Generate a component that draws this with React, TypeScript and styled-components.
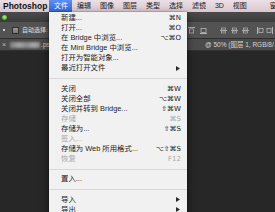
import React from "react";
import styled, { createGlobalStyle } from "styled-components";

const GlobalStyle = createGlobalStyle`
  html, body { margin: 0; padding: 0; background: #262626; }
  body {
    width: 275px; height: 212px; overflow: hidden;
    font-family: "Liberation Sans", "Noto Sans CJK SC", sans-serif;
  }
  #root { width: 275px; height: 212px; }
`;

const Screen = styled.div`
  position: relative;
  width: 275px;
  height: 212px;
  overflow: hidden;
  display: flex;
  flex-direction: column;
  background: #262626;
`;

const MenuBar = styled.div`
  flex: none;
  height: 12px;
  display: flex;
  align-items: stretch;
  overflow: hidden;
  background: linear-gradient(#eddfe6, #d9c7d0);
`;

const AppName = styled.div`
  font-weight: 700;
  font-size: 8.5px;
  line-height: 12px;
  color: #141414;
  padding: 0 2px 0 3px;
`;

const MenuTitle = styled.div<{ $active?: boolean; $lead?: number }>`
  font-size: 7px;
  line-height: 12px;
  padding: 0 4.5px;
  margin-left: ${(p) => p.$lead ?? 0}px;
  white-space: nowrap;
  flex: none;
  color: ${(p) => (p.$active ? "#ffffff" : "#1a1a1a")};
  background: ${(p) =>
    p.$active ? "linear-gradient(#5b8ff0, #3467d8)" : "transparent"};
`;

const TitleStrip = styled.div`
  flex: none;
  height: 10px;
  display: flex;
  align-items: center;
  padding-left: 2px;
  background: linear-gradient(#4a4a4a, #3b3b3b);
`;

const TrafficDot = styled.div`
  width: 5px;
  height: 5px;
  border-radius: 50%;
  background: radial-gradient(circle at 50% 40%, #b9f08a, #4fb22a 70%, #2f7a18);
`;

const OptionsBar = styled.div`
  flex: none;
  height: 16px;
  display: grid;
  grid-template-columns: 1fr 87px;
  align-items: center;
  background: #535353;
  border-bottom: 1px solid #2f2f2f;
`;

const OptionsLeft = styled.div`
  display: flex;
  align-items: center;
  padding-left: 3px;
`;

const ToolDot = styled.div`
  width: 2px;
  height: 2px;
  background: #d0d0d0;
  margin-right: 7px;
`;

const CheckBox = styled.div`
  width: 5px;
  height: 5px;
  border: 0.5px solid #2e2e2e;
  background: linear-gradient(#9a9a9a, #767676);
  margin-right: 3px;
`;

const OptLabel = styled.span`
  font-size: 6px;
  line-height: 8px;
  color: #e2e2e2;
  white-space: nowrap;
`;

const OptionsRight = styled.div`
  display: flex;
  align-items: center;
`;

const IconGroup = styled.div<{ $gap: number; $after: number }>`
  display: flex;
  align-items: center;
  gap: ${(p) => p.$gap}px;
  margin-right: ${(p) => p.$after}px;
`;

const IconBox = styled.svg`
  width: 7px;
  height: 7px;
  flex: none;
  display: block;
`;

type IconKind = "top" | "box" | "center" | "left" | "right";

function OptIcon({ kind }: { kind: IconKind }) {
  const c = "#b4b4b4";
  return (
    <IconBox viewBox="0 0 7 7">
      {kind === "top" && (
        <>
          <line x1="0" y1="0.5" x2="7" y2="0.5" stroke={c} strokeWidth="1" />
          <rect x="1.5" y="2" width="4" height="4" fill="none" stroke={c} strokeWidth="0.8" />
        </>
      )}
      {kind === "box" && (
        <>
          <rect x="1" y="1.5" width="5" height="4" fill="none" stroke={c} strokeWidth="0.8" />
          <line x1="0" y1="6.5" x2="7" y2="6.5" stroke={c} strokeWidth="1" />
        </>
      )}
      {kind === "center" && (
        <>
          <line x1="0" y1="3.5" x2="7" y2="3.5" stroke={c} strokeWidth="0.8" />
          <rect x="1.5" y="1" width="4" height="2" fill="none" stroke={c} strokeWidth="0.7" />
          <rect x="1.5" y="4" width="4" height="2" fill="none" stroke={c} strokeWidth="0.7" />
        </>
      )}
      {kind === "left" && (
        <>
          <line x1="0.5" y1="0" x2="0.5" y2="7" stroke={c} strokeWidth="1" />
          <rect x="2" y="1.5" width="4" height="4" fill="none" stroke={c} strokeWidth="0.8" />
        </>
      )}
      {kind === "right" && (
        <>
          <rect x="1" y="1.5" width="4" height="4" fill="none" stroke={c} strokeWidth="0.8" />
          <line x1="6.5" y1="0" x2="6.5" y2="7" stroke={c} strokeWidth="1" />
        </>
      )}
    </IconBox>
  );
}

const TabRow = styled.div`
  flex: none;
  height: 11px;
  display: grid;
  grid-template-columns: 205px 1fr;
  align-items: center;
  background: #4b4b4b;
  border-bottom: 1px solid #303030;
`;

const TabLeft = styled.div`
  display: flex;
  align-items: center;
  padding-left: 2px;
`;

const CloseMark = styled.span`
  font-size: 7px;
  line-height: 8px;
  color: #bdbdbd;
  margin-right: 4px;
`;

const RedactedName = styled.div`
  width: 30px;
  height: 6px;
  background: linear-gradient(90deg, #7e7e7e, #a2a2a2 30%, #8a8a8a 55%, #a6a6a6 80%, #8c8c8c);
  filter: blur(0.8px);
  margin-right: 1px;
`;

const TabText = styled.span`
  font-size: 6.5px;
  line-height: 8px;
  color: #d6d6d6;
  white-space: nowrap;
  overflow: hidden;
`;

const Canvas = styled.div`
  flex: 1;
  background: #272727;
`;

const Dropdown = styled.div`
  position: absolute;
  left: 49px;
  top: 12px;
  width: 138px;
  height: 210px;
  padding-top: 1px;
  background: #f1f1f1;
  box-shadow: 0 3px 8px rgba(0, 0, 0, 0.55), 0 0 0 0.5px rgba(0, 0, 0, 0.25);
`;

const Item = styled.div<{ $disabled?: boolean }>`
  display: flex;
  align-items: center;
  height: 10px;
  padding: 0 6px 0 12px;
  font-size: 7.4px;
  line-height: 10px;
  color: ${(p) => (p.$disabled ? "#a8a8a8" : "#1c1c1c")};
`;

const ItemLabel = styled.span`
  flex: 1;
  white-space: nowrap;
`;

const Shortcut = styled.span`
  font-family: "DejaVu Sans", sans-serif;
  font-size: 7px;
  white-space: nowrap;
`;

const Separator = styled.div`
  height: 1px;
  background: #d8d8d8;
  margin: 5px 0 4.5px;
`;

const SubArrow = styled.svg`
  width: 4px;
  height: 5px;
  display: block;
  margin-right: 1px;
`;

type Entry =
  | { type: "sep" }
  | { type: "item"; label: string; shortcut?: string; disabled?: boolean; sub?: boolean };

const entries: Entry[] = [
  { type: "item", label: "新建...", shortcut: "⌘N" },
  { type: "item", label: "打开...", shortcut: "⌘O" },
  { type: "item", label: "在 Bridge 中浏览...", shortcut: "⌥⌘O" },
  { type: "item", label: "在 Mini Bridge 中浏览..." },
  { type: "item", label: "打开为智能对象..." },
  { type: "item", label: "最近打开文件", sub: true },
  { type: "sep" },
  { type: "item", label: "关闭", shortcut: "⌘W" },
  { type: "item", label: "关闭全部", shortcut: "⌥⌘W" },
  { type: "item", label: "关闭并转到 Bridge...", shortcut: "⇧⌘W" },
  { type: "item", label: "存储", shortcut: "⌘S", disabled: true },
  { type: "item", label: "存储为...", shortcut: "⇧⌘S" },
  { type: "item", label: "签入...", disabled: true },
  { type: "item", label: "存储为 Web 所用格式...", shortcut: "⌥⇧⌘S" },
  { type: "item", label: "恢复", shortcut: "F12", disabled: true },
  { type: "sep" },
  { type: "item", label: "置入..." },
  { type: "sep" },
  { type: "item", label: "导入", sub: true },
  { type: "item", label: "导出", sub: true },
];

const menus: { label: string; lead?: number }[] = [
  { label: "编辑" },
  { label: "图像" },
  { label: "图层" },
  { label: "类型" },
  { label: "选择" },
  { label: "滤镜" },
  { label: "3D" },
  { label: "视图" },
  { label: "窗口", lead: 14 },
];

export default function App() {
  return (
    <>
      <GlobalStyle />
      <Screen>
        <MenuBar>
          <AppName>Photoshop</AppName>
          <MenuTitle $active>文件</MenuTitle>
          {menus.map((m) => (
            <MenuTitle key={m.label} $lead={m.lead}>
              {m.label}
            </MenuTitle>
          ))}
        </MenuBar>
        <TitleStrip>
          <TrafficDot />
        </TitleStrip>
        <OptionsBar>
          <OptionsLeft>
            <ToolDot />
            <CheckBox />
            <OptLabel>自动选择:</OptLabel>
          </OptionsLeft>
          <OptionsRight>
            <IconGroup $gap={5} $after={13}>
              <OptIcon kind="top" />
              <OptIcon kind="box" />
            </IconGroup>
            <IconGroup $gap={4} $after={8}>
              <OptIcon kind="center" />
              <OptIcon kind="center" />
              <OptIcon kind="center" />
            </IconGroup>
            <IconGroup $gap={2} $after={0}>
              <OptIcon kind="left" />
              <OptIcon kind="right" />
            </IconGroup>
          </OptionsRight>
        </OptionsBar>
        <TabRow>
          <TabLeft>
            <CloseMark>×</CloseMark>
            <RedactedName />
            <TabText>.psd</TabText>
          </TabLeft>
          <TabText>@ 50% (图层 1, RGB/8/</TabText>
        </TabRow>
        <Canvas />
        <Dropdown>
          {entries.map((e, i) =>
            e.type === "sep" ? (
              <Separator key={i} />
            ) : (
              <Item key={i} $disabled={e.disabled}>
                <ItemLabel>{e.label}</ItemLabel>
                {e.shortcut && <Shortcut>{e.shortcut}</Shortcut>}
                {e.sub && (
                  <SubArrow viewBox="0 0 4 5">
                    <polygon points="0,0 4,2.5 0,5" fill="#2a2a2a" />
                  </SubArrow>
                )}
              </Item>
            )
          )}
        </Dropdown>
      </Screen>
    </>
  );
}
